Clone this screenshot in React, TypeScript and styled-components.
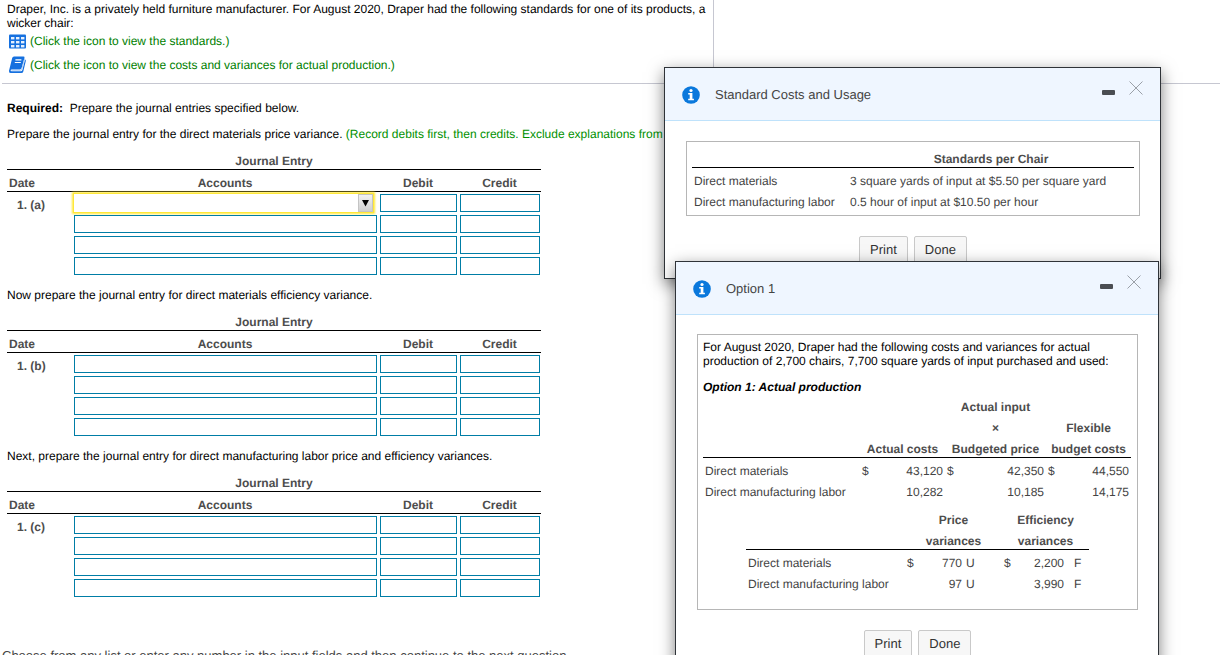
import React from "react";
import styled, { createGlobalStyle } from "styled-components";

const GlobalStyle = createGlobalStyle`
  *, *::before, *::after { box-sizing: border-box; }
  body {
    margin: 0;
    background: #fff;
    color: #000;
    font-family: "Liberation Sans", Arial, sans-serif;
    font-size: 12px;
    line-height: 14px;
    text-rendering: geometricPrecision;
  }
  button, input, select { font: inherit; color: inherit; text-rendering: inherit; }
`;

const Page = styled.div`
  position: relative;
  height: 100vh;
  overflow: hidden;
`;

const TopBand = styled.header`
  margin-left: 2px;
  border-bottom: 1px solid #c6c7d1;
`;

const Problem = styled.section`
  width: 712px;
  max-width: 100%;
  padding: 2px 5px 7px;
  border-right: 1px solid #c6c7d1;
`;

const Paragraph = styled.p`
  margin: 0;
`;

const LinkList = styled.div`
  display: flex;
  flex-direction: column;
  align-items: flex-start;
  gap: 2px;
`;

const IconLink = styled.a`
  display: flex;
  align-items: center;
  gap: 3px;
  height: 22px;
  padding-left: 1px;
  color: #008000;
  text-decoration: none;
`;

const Work = styled.main`
  padding: 17px 0 0 7px;
`;

const Instruction = styled.p`
  margin: 12px 0 7px;
  white-space: nowrap;
`;

const Hint = styled.span`
  color: #009000;
`;

const Table = styled.table<{ $width: number; $indent?: number; $above?: number }>`
  width: ${(p) => p.$width}px;
  margin-top: ${(p) => p.$above ?? 0}px;
  margin-left: ${(p) => p.$indent ?? 0}px;
  table-layout: fixed;
  border-collapse: separate;
  border-spacing: 0;
  color: #444;
`;

const Head = styled.th<{ $align?: string; $rule?: boolean }>`
  padding: 6px 2px 1px;
  border-bottom: ${(p) => (p.$rule ? "1px solid #000" : "0")};
  color: #4d4d4d;
  text-align: ${(p) => p.$align ?? "center"};
  font-weight: bold;
  white-space: nowrap;
`;

const SpacerHead = styled.td<{ $rule?: boolean }>`
  padding: 0;
  border-bottom: ${(p) => (p.$rule ? "1px solid #000" : "0")};
`;

const Cell = styled.td<{ $align?: string; $lead?: number }>`
  padding: 6px 2px 1px ${(p) => p.$lead ?? 2}px;
  text-align: ${(p) => p.$align ?? "left"};
  white-space: nowrap;
`;

const DateCell = styled.th`
  padding: 6px 2px 1px 10px;
  color: #4d4d4d;
  text-align: left;
  vertical-align: top;
`;

const FieldCell = styled.td`
  padding: 2px 1px 1px 2px;
`;

const fieldLook = `
  display: block;
  width: 100%;
  height: 18px;
  margin: 0;
  padding: 0 4px;
  border: 1px solid #007da6;
  border-radius: 0;
  background: #fff;
  outline: none;
  appearance: none;
`;

const AmountField = styled.input`
  ${fieldLook}
`;

const AccountField = styled.select`
  ${fieldLook}
`;

const ActiveAccount = styled.div`
  display: grid;
  grid-template-columns: 1fr 15px;
  height: 18px;
  margin-right: 4px;
  box-shadow: 0 0 0 1px #ffe838, 0 0 2px 2px #ffe838;
`;

const ActiveSelect = styled.select`
  ${fieldLook}
  grid-area: 1 / 1 / 2 / 3;
  border: 0;
`;

const ArrowButton = styled.span`
  grid-area: 1 / 2;
  display: flex;
  align-items: center;
  justify-content: center;
  border: 1px solid #c4c4c4;
  background: linear-gradient(#f2f2f2, #cfcfcf);
  pointer-events: none;
`;

const Footer = styled.footer`
  margin-top: 50px;
  padding-left: 2px;
  color: #444;
  font-size: 13px;
  line-height: 15px;
  white-space: nowrap;
`;

const Dialog = styled.section<{ $left: number; $top: number; $width: number }>`
  position: absolute;
  left: ${(p) => p.$left}px;
  top: ${(p) => p.$top}px;
  width: ${(p) => p.$width}px;
  border: 1px solid #2f3338;
  background: #fff;
  box-shadow: 0 5px 15px rgba(0, 0, 0, 0.5);
`;

const DialogHeader = styled.header`
  display: flex;
  align-items: center;
  height: 53px;
  padding: 0 17px;
  border-bottom: 1px solid #bfe2fb;
  background: #eff6ff;
`;

const DialogTitle = styled.h2`
  flex: 1;
  margin: 0 0 0 15px;
  color: #444;
  font-size: 13px;
  font-weight: normal;
  line-height: 15px;
`;

const HeaderTools = styled.div`
  display: flex;
  align-self: flex-start;
  gap: 14px;
  padding-top: 13px;
`;

const ToolButton = styled.button`
  display: flex;
  padding: 0;
  border: 0;
  background: none;
`;

const DialogBody = styled.div<{ $top: number }>`
  padding: ${(p) => p.$top}px 20px 15px 21px;
`;

const ContentBox = styled.div<{ $bottom: number }>`
  padding: 4px 5px ${(p) => p.$bottom}px;
  border: 1px solid #b6b6b6;
`;

const Intro = styled.p`
  margin: 1px 0 12px;
  color: #000;
`;

const OptionName = styled.h3`
  margin: 0;
  color: #000;
  font-size: 12px;
  font-style: italic;
  line-height: 14px;
`;

const Actions = styled.div`
  display: flex;
  justify-content: center;
  gap: 6px;
  margin-top: 20px;
`;

const ActionButton = styled.button`
  height: 27px;
  padding: 0 10px;
  border: 1px solid #c9c9c9;
  border-radius: 2px;
  background: #f7f7f7;
  color: #333;
  font-size: 13px;
`;

const GridIcon = () => (
  <svg width="19" height="18" viewBox="0 0 19 18" aria-hidden="true">
    <rect x="1" y="2.5" width="17" height="14" rx="1" fill="#1570df" />
    <g fill="#e6f0fd">
      {[5, 9, 13].map((y) =>
        [3, 8, 13].map((x) => <rect key={`${x}-${y}`} x={x} y={y} width="3.4" height="2.4" />)
      )}
    </g>
  </svg>
);

const BookIcon = () => (
  <svg width="19" height="18" viewBox="0 0 19 18" aria-hidden="true">
    <path
      d="M6 0.5h9.4q1.4 0 1.1 1.4L13.7 12q-.4 1.4-1.8 1.4H3.6q-1 0-1 .9t1 .9h9.2q1.2 0 1.6-1.3L17 3.6q1 .4.8 1.4l-2.5 10.4q-.4 1.6-2 1.6H2.6Q.6 17 1 14.8L4.2 2Q4.6.5 6 .5z"
      fill="#1570df"
    />
    <path d="M3.4 14.3h9.2q.8 0 1.1-.9L16.6 3" fill="none" stroke="#a9cbf5" strokeWidth="0.9" />
    <path d="M7.4 3.9h6M6.8 6.5h6" stroke="#fff" strokeWidth="1.2" />
  </svg>
);

const InfoIcon = () => (
  <svg width="18" height="20" viewBox="0 -2 18 20" aria-hidden="true">
    <circle cx="9" cy="9" r="8.8" fill="#0a78dc" />
    <circle cx="9" cy="4.5" r="1.6" fill="#fff" />
    <path d="M6.2 7h4.2v5.7h1.5v1.6H6.2v-1.6h1.5V8.6H6.2z" fill="#fff" />
  </svg>
);

const MinimizeIcon = () => (
  <svg width="13" height="14" viewBox="0 0 13 14" aria-hidden="true">
    <rect x="0" y="9" width="13" height="5" rx="1" fill="#4a4d52" />
  </svg>
);

const CloseIcon = () => (
  <svg width="14" height="14" viewBox="0 0 14 14" aria-hidden="true">
    <path d="M.5.5l13 13M13.5.5l-13 13" stroke="#9aa0a8" strokeWidth="1" />
  </svg>
);

const ArrowIcon = () => (
  <svg width="7" height="8" viewBox="0 0 7 8" aria-hidden="true">
    <path d="M0 1h7L3.5 7.5z" fill="#000" />
  </svg>
);

function JournalTable({ part, active }: { part: string; active?: boolean }) {
  return (
    <Table $width={534}>
      <colgroup>
        <col width="65" />
        <col width="306" />
        <col width="80" />
        <col width="83" />
      </colgroup>
      <thead>
        <tr>
          <Head colSpan={4} $rule>Journal Entry</Head>
        </tr>
        <tr>
          <Head $align="left" $rule>Date</Head>
          <Head $rule>Accounts</Head>
          <Head $rule>Debit</Head>
          <Head $rule>Credit</Head>
        </tr>
      </thead>
      <tbody>
        {[1, 2, 3, 4].map((line) => (
          <tr key={line}>
            {line === 1 && <DateCell scope="rowgroup" rowSpan={4}>1. ({part})</DateCell>}
            <FieldCell>
              {active && line === 1 ? (
                <ActiveAccount>
                  <ActiveSelect aria-label={`Account ${part} ${line}`} />
                  <ArrowButton><ArrowIcon /></ArrowButton>
                </ActiveAccount>
              ) : (
                <AccountField aria-label={`Account ${part} ${line}`} />
              )}
            </FieldCell>
            <FieldCell><AmountField aria-label={`Debit ${part} ${line}`} /></FieldCell>
            <FieldCell><AmountField aria-label={`Credit ${part} ${line}`} /></FieldCell>
          </tr>
        ))}
      </tbody>
    </Table>
  );
}

type PopupProps = {
  title: string;
  left: number;
  top: number;
  width: number;
  bodyTop: number;
  boxBottom: number;
  children: React.ReactNode;
};

function Popup({ title, left, top, width, bodyTop, boxBottom, children }: PopupProps) {
  return (
    <Dialog role="dialog" aria-label={title} $left={left} $top={top} $width={width}>
      <DialogHeader>
        <InfoIcon />
        <DialogTitle>{title}</DialogTitle>
        <HeaderTools>
          <ToolButton aria-label="Minimize"><MinimizeIcon /></ToolButton>
          <ToolButton aria-label="Close"><CloseIcon /></ToolButton>
        </HeaderTools>
      </DialogHeader>
      <DialogBody $top={bodyTop}>
        <ContentBox $bottom={boxBottom}>{children}</ContentBox>
        <Actions>
          <ActionButton>Print</ActionButton>
          <ActionButton>Done</ActionButton>
        </Actions>
      </DialogBody>
    </Dialog>
  );
}

const costs = [
  ["Direct materials", "$", "43,120", "$", "42,350", "$", "44,550"],
  ["Direct manufacturing labor", "", "10,282", "", "10,185", "", "14,175"],
];

const variances = [
  ["Direct materials", "$", "770", "U", "$", "2,200", "F"],
  ["Direct manufacturing labor", "", "97", "U", "", "3,990", "F"],
];

export default function App() {
  return (
    <Page>
      <GlobalStyle />
      <TopBand>
        <Problem>
          <Paragraph>
            Draper, Inc. is a privately held furniture manufacturer. For August 2020, Draper had the
            following standards for one of its products, a wicker chair:
          </Paragraph>
          <LinkList>
            <IconLink href="#standards">
              <GridIcon />
              (Click the icon to view the standards.)
            </IconLink>
            <IconLink href="#costs">
              <BookIcon />
              (Click the icon to view the costs and variances for actual production.)
            </IconLink>
          </LinkList>
        </Problem>
      </TopBand>

      <Work>
        <Paragraph>
          <b>Required:</b>&nbsp; Prepare the journal entries specified below.
        </Paragraph>
        <Instruction>
          Prepare the journal entry for the direct materials price variance.{" "}
          <Hint>
            (Record debits first, then credits. Exclude explanations from any journal entries.)
          </Hint>
        </Instruction>
        <JournalTable part="a" active />
        <Instruction>Now prepare the journal entry for direct materials efficiency variance.</Instruction>
        <JournalTable part="b" />
        <Instruction>
          Next, prepare the journal entry for direct manufacturing labor price and efficiency variances.
        </Instruction>
        <JournalTable part="c" />
      </Work>
      <Footer>
        Choose from any list or enter any number in the input fields and then continue to the next question.
      </Footer>

      <Popup title="Standard Costs and Usage" left={664} top={67} width={497} bodyTop={20} boxBottom={5}>
        <Table $width={442}>
          <colgroup>
            <col width="156" />
            <col width="286" />
          </colgroup>
          <thead>
            <tr>
              <SpacerHead $rule />
              <Head $rule>Standards per Chair</Head>
            </tr>
          </thead>
          <tbody>
            <tr>
              <Cell>Direct materials</Cell>
              <Cell>3 square yards of input at $5.50 per square yard</Cell>
            </tr>
            <tr>
              <Cell>Direct manufacturing labor</Cell>
              <Cell>0.5 hour of input at $10.50 per hour</Cell>
            </tr>
          </tbody>
        </Table>
      </Popup>

      <Popup title="Option 1" left={675} top={261} width={484} bodyTop={19} boxBottom={17}>
        <Intro>
          For August 2020, Draper had the following costs and variances for actual production of 2,700
          chairs, 7,700 square yards of input purchased and used:
        </Intro>
        <OptionName>Option 1: Actual production</OptionName>
        <Table $width={428}>
          <colgroup>
            <col width="157" />
            <col width="15" />
            <col width="70" />
            <col width="15" />
            <col width="86" />
            <col width="15" />
            <col width="70" />
          </colgroup>
          <thead>
            <tr>
              <SpacerHead colSpan={3} />
              <Head colSpan={2}>Actual input</Head>
              <SpacerHead colSpan={2} />
            </tr>
            <tr>
              <SpacerHead colSpan={3} />
              <Head colSpan={2}>×</Head>
              <Head colSpan={2}>Flexible</Head>
            </tr>
            <tr>
              <SpacerHead $rule />
              <Head colSpan={2} $rule>Actual costs</Head>
              <Head colSpan={2} $rule>Budgeted price</Head>
              <Head colSpan={2} $rule>budget costs</Head>
            </tr>
          </thead>
          <tbody>
            {costs.map((row) => (
              <tr key={row[0]}>
                {row.map((value, i) => (
                  <Cell key={i} $align={i > 0 && i % 2 === 0 ? "right" : "left"}>{value}</Cell>
                ))}
              </tr>
            ))}
          </tbody>
        </Table>
        <Table $width={343} $indent={43} $above={7}>
          <colgroup>
            <col width="159" />
            <col width="15" />
            <col width="44" />
            <col width="38" />
            <col width="15" />
            <col width="49" />
            <col width="23" />
          </colgroup>
          <thead>
            <tr>
              <SpacerHead />
              <Head colSpan={3}>Price</Head>
              <Head colSpan={3}>Efficiency</Head>
            </tr>
            <tr>
              <SpacerHead $rule />
              <Head colSpan={3} $rule>variances</Head>
              <Head colSpan={3} $rule>variances</Head>
            </tr>
          </thead>
          <tbody>
            {variances.map((row) => (
              <tr key={row[0]}>
                {row.map((value, i) => (
                  <Cell
                    key={i}
                    $align={i === 2 || i === 5 ? "right" : "left"}
                    $lead={i === 6 ? 8 : 2}
                  >
                    {value}
                  </Cell>
                ))}
              </tr>
            ))}
          </tbody>
        </Table>
      </Popup>
    </Page>
  );
}
